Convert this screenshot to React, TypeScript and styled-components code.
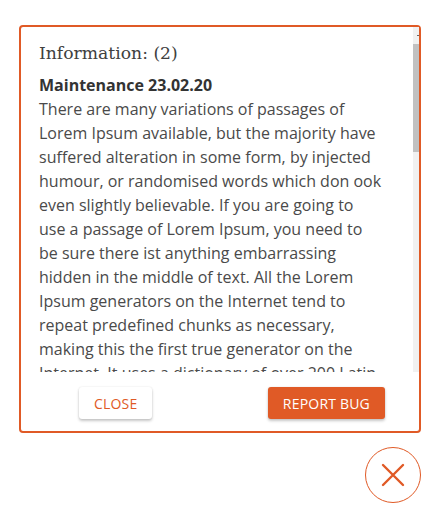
import React from "react";
import styled, { createGlobalStyle } from "styled-components";

const ORANGE = "#e05a26";

const Global = createGlobalStyle`
  html, body { margin: 0; padding: 0; background: #fff; }
  body { font-family: "Open Sans", "Liberation Sans", sans-serif; }
  * { box-sizing: border-box; }
`;

const Page = styled.div`
  width: 438px;
  height: 510px;
  padding: 25px 17px 0 19px;
  display: flex;
  flex-direction: column;
  align-items: flex-end;
`;

const Card = styled.section`
  width: 402px;
  border: 2px solid ${ORANGE};
  border-radius: 4px;
  background: #fff;
  display: flex;
  flex-direction: column;
`;

const Body = styled.div`
  height: 345px;
  display: flex;
`;

const Content = styled.div`
  flex: 1;
  overflow: hidden;
  padding: 13px 28px 20px 18px;
`;

const ScrollTrack = styled.div`
  width: 6px;
  background: #f1f1f1;
  display: flex;
  flex-direction: column;
  align-items: stretch;
`;

const ScrollArrow = styled.div`
  height: 17px;
  display: flex;
  align-items: center;
  justify-content: flex-end;
  &::after {
    content: "";
    width: 2px;
    height: 1px;
    background: #6a6a6a;
  }
`;

const ScrollThumb = styled.div<{ $size: number }>`
  height: ${(p) => p.$size}px;
  background: #c1c1c1;
`;

const Title = styled.h2`
  margin: 0 0 7px;
  font-family: "DejaVu Serif", "Liberation Serif", serif;
  font-weight: 400;
  font-size: 17.2px;
  line-height: 26px;
  color: #404040;
`;

const Message = styled.div`
  font-size: 16px;
  line-height: 24px;
  color: #4a4a4a;
  white-space: pre-line;
  & + & { margin-top: 24px; }
`;

const MessageHead = styled.div`
  font-weight: 700;
  color: #333;
`;

const Actions = styled.div`
  display: flex;
  justify-content: space-between;
  padding: 15px 34px 12px 58px;
`;

const Button = styled.button<{ $primary?: boolean }>`
  height: 32px;
  padding: 0 15px;
  border: none;
  border-radius: 3px;
  font-family: "Open Sans", "Liberation Sans", sans-serif;
  font-size: 14px;
  font-weight: 500;
  letter-spacing: 0.2px;
  text-transform: uppercase;
  cursor: pointer;
  background: ${(p) => (p.$primary ? ORANGE : "#fff")};
  color: ${(p) => (p.$primary ? "#fff" : ORANGE)};
  box-shadow: 0 2px 3px rgba(0, 0, 0, 0.22), 0 0 2px rgba(0, 0, 0, 0.1);
`;

const CloseCircle = styled.button`
  margin-top: 14px;
  width: 56px;
  height: 56px;
  border-radius: 50%;
  border: 1.6px solid ${ORANGE};
  background: #fff;
  display: flex;
  align-items: center;
  justify-content: center;
  padding: 0;
  cursor: pointer;
`;

const messages = [
  {
    head: "Maintenance 23.02.20",
    text:
      "There are many variations of passages of Lorem Ipsum available, but the majority have suffered alteration in some form, by injected humour, or randomised words which don ook even slightly believable. If you are going to\nuse a passage of Lorem Ipsum, you need to be sure there ist anything embarrassing hidden in the middle of text. All the Lorem Ipsum generators on the Internet tend to repeat predefined chunks as necessary, making this the first true generator on the Internet. It uses a dictionary of over 200 Latin words, combined with a handful of model sentence structures, to generate Lorem Ipsum which looks reasonable. The generated Lorem Ipsum is therefore always free from repetition, injected humour, or non-characteristic words etc.",
  },
  {
    head: "Update 14.02.20",
    text:
      "Contrary to popular belief, Lorem Ipsum is not simply random text. It has roots in a piece of classical Latin literature from 45 BC, making it over 2000 years old. Richard McClintock, a Latin professor at Hampden-Sydney College in Virginia, looked up one of the more obscure Latin words.",
  },
];

export default function App() {
  return (
    <>
      <Global />
      <Page>
        <Card>
          <Body>
            <Content>
              <Title>Information: (2)</Title>
              {messages.map((m) => (
                <Message key={m.head}>
                  <MessageHead>{m.head}</MessageHead>
                  {m.text}
                </Message>
              ))}
            </Content>
            <ScrollTrack>
              <ScrollArrow />
              <ScrollThumb $size={108} />
            </ScrollTrack>
          </Body>
          <Actions>
            <Button>Close</Button>
            <Button $primary>Report Bug</Button>
          </Actions>
        </Card>
        <CloseCircle aria-label="close">
          <svg width="24" height="24" viewBox="0 0 24 24">
            <path d="M2 2 L22 22 M22 2 L2 22" stroke={ORANGE} strokeWidth="2.4" strokeLinecap="round" fill="none" />
          </svg>
        </CloseCircle>
      </Page>
    </>
  );
}
